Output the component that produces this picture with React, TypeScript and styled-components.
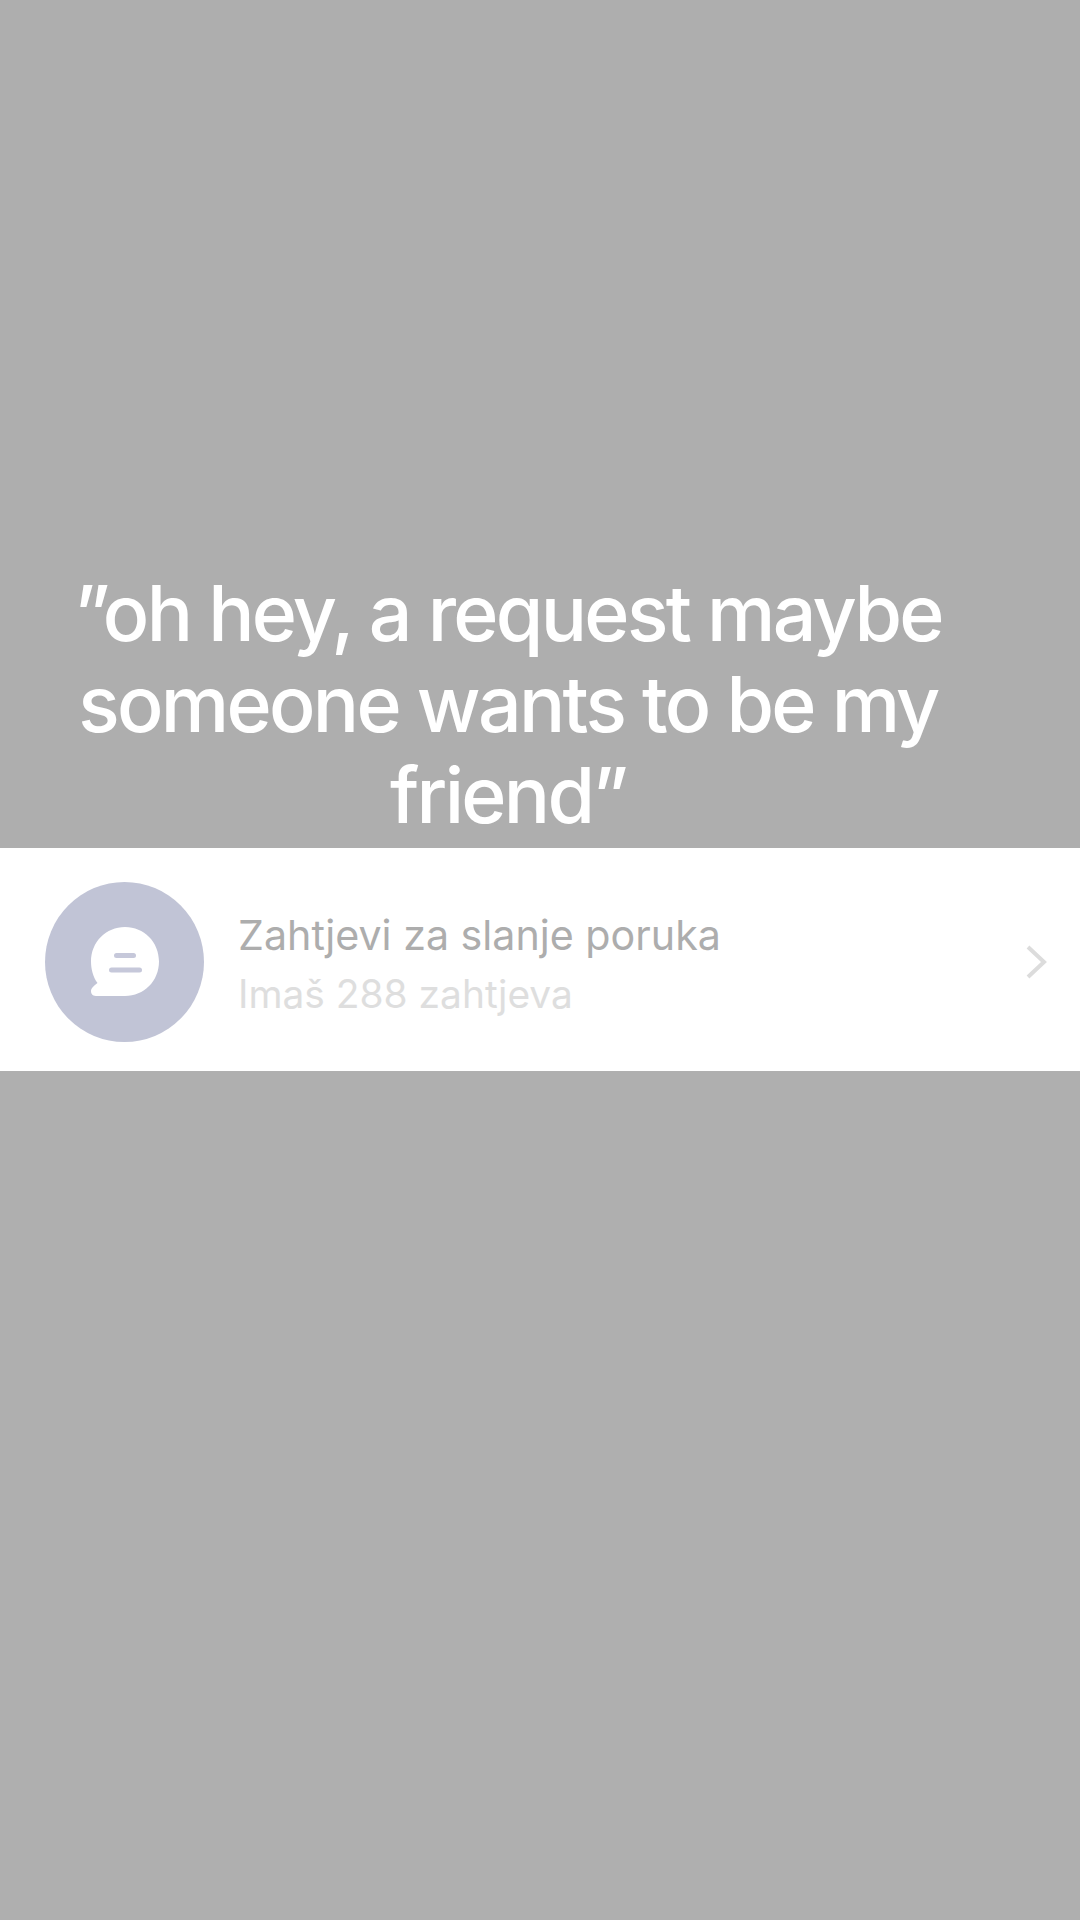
import React from "react";
import styled, { createGlobalStyle } from "styled-components";

const Global = createGlobalStyle`
  html, body { margin: 0; padding: 0; background: #aeaeae; }
  * { box-sizing: border-box; }
`;

const Page = styled.main`
  width: 1080px;
  height: 1920px;
  display: flex;
  flex-direction: column;
  background: #aeaeae;
  overflow: hidden;
`;

const CaptionArea = styled.section`
  height: 848px;
  display: flex;
  align-items: flex-end;
  padding: 0 104px 7px 40px;
`;

const Caption = styled.h1`
  margin: 0;
  width: 100%;
  font-family: Inter, "Liberation Sans", sans-serif;
  font-size: 77px;
  line-height: 91px;
  font-weight: 550;
  letter-spacing: -2.7px;
  color: #fff;
  text-align: center;
`;

const RequestRow = styled.section`
  height: 223px;
  background: #fff;
  display: flex;
  align-items: center;
  padding: 4px 32px 0 45px;
`;

const Avatar = styled.div`
  width: 159px;
  height: 160px;
  border-radius: 50%;
  background: #c1c4d6;
  flex: none;
  display: flex;
  align-items: center;
  justify-content: center;
`;

const BubbleIcon = styled.svg`
  width: 68px;
  height: 69px;
  flex: none;
`;

const TextColumn = styled.div`
  flex: 1;
  margin-left: 34px;
  padding-top: 7px;
  display: flex;
  flex-direction: column;
  font-family: Inter, "Liberation Sans", sans-serif;
`;

const Title = styled.div`
  font-size: 41.2px;
  line-height: 57px;
  color: #adadad;
`;

const Subtitle = styled.div`
  font-size: 38.9px;
  line-height: 59px;
  color: #dedede;
`;

const Chevron = styled.svg`
  width: 24px;
  height: 36px;
  flex: none;
`;

const Bottom = styled.section`
  flex: 1;
  background: #afafaf;
`;

export default function App() {
  return (
    <Page>
      <Global />
      <CaptionArea>
        <Caption>
          ”oh hey, a request maybe
          <br />
          someone wants to be my
          <br />
          friend”
        </Caption>
      </CaptionArea>
      <RequestRow>
        <Avatar>
          <BubbleIcon viewBox="0 0 68 69">
            <path
              fill="#fff"
              d="M34 0C53 0 68 15 68 34.5C68 54 53 69 34 69H5C1 69 0 66 0 64C0 61 3 59 6.5 56C2 50 0 42 0 34.5C0 15 15 0 34 0Z"
            />
            <rect x="23" y="26" width="22" height="5" rx="2.5" fill="#c6c8da" />
            <rect x="18" y="40.5" width="33" height="5" rx="2.5" fill="#c6c8da" />
          </BubbleIcon>
        </Avatar>
        <TextColumn>
          <Title>Zahtjevi za slanje poruka</Title>
          <Subtitle>Imaš 288 zahtjeva</Subtitle>
        </TextColumn>
        <Chevron viewBox="0 0 24 36">
          <path d="M4 3L20 18L4 33" fill="none" stroke="#dcdcdc" strokeWidth="4" />
        </Chevron>
      </RequestRow>
      <Bottom />
    </Page>
  );
}
